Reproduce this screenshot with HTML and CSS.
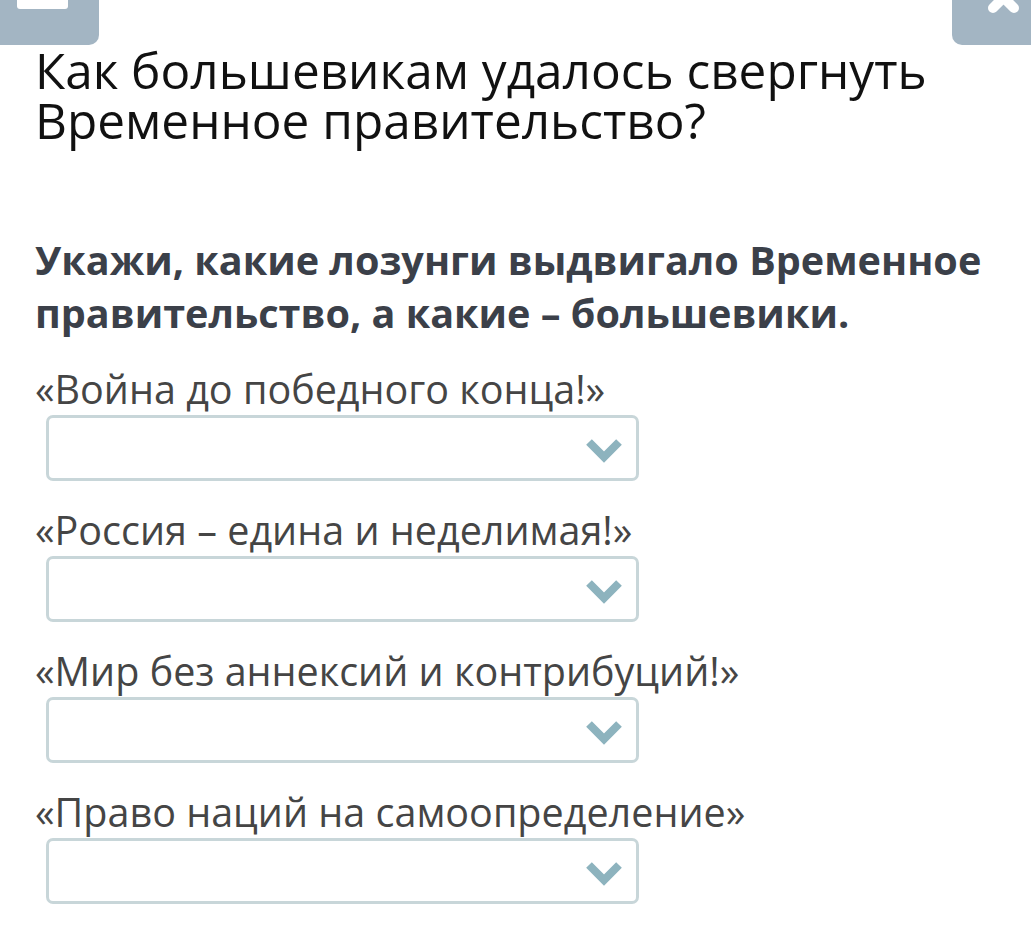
FILE: index.html
```html
<!DOCTYPE html>
<html lang="ru">
<head>
<meta charset="utf-8">
<link rel="stylesheet" href="styles.css">
</head>
<body>
<div class="topbar">
  <div class="btn btn-menu"><span class="bar"></span></div>
  <div class="btn btn-close">
    <svg width="79" height="45" viewBox="0 0 79 45">
      <path d="M41 8 L62 -13 M62 8 L41 -13" stroke="#fff" stroke-width="10" stroke-linecap="round" fill="none"/>
    </svg>
  </div>
</div>
<main class="content">
  <h1 class="title">Как большевикам удалось свергнуть Временное правительство?</h1>
  <h2 class="task">Укажи, какие лозунги выдвигало Временное правительство, а какие – большевики.</h2>
  <div class="item">
    <div class="label">«Война до победного конца!»</div>
    <div class="select"><svg class="chev" width="36" height="26" viewBox="0 0 36 26"><path d="M3 5 L18 20 L33 5" stroke="#8db3be" stroke-width="8" fill="none"/></svg></div>
  </div>
  <div class="item">
    <div class="label">«Россия – едина и неделимая!»</div>
    <div class="select"><svg class="chev" width="36" height="26" viewBox="0 0 36 26"><path d="M3 5 L18 20 L33 5" stroke="#8db3be" stroke-width="8" fill="none"/></svg></div>
  </div>
  <div class="item">
    <div class="label">«Мир без аннексий и контрибуций!»</div>
    <div class="select"><svg class="chev" width="36" height="26" viewBox="0 0 36 26"><path d="M3 5 L18 20 L33 5" stroke="#8db3be" stroke-width="8" fill="none"/></svg></div>
  </div>
  <div class="item">
    <div class="label">«Право наций на самоопределение»</div>
    <div class="select"><svg class="chev" width="36" height="26" viewBox="0 0 36 26"><path d="M3 5 L18 20 L33 5" stroke="#8db3be" stroke-width="8" fill="none"/></svg></div>
  </div>
</main>
</body>
</html>
```
FILE: styles.css
```css
html, body {
  margin: 0;
  padding: 0;
  background: #fff;
}
body {
  font-family: "Open Sans", "Noto Sans", sans-serif;
  width: 1031px;
  height: 952px;
  overflow: hidden;
}
.topbar {
  display: flex;
  justify-content: space-between;
  height: 45px;
}
.btn {
  background: #a3b5c3;
  height: 45px;
  position: relative;
}
.btn-menu {
  width: 99px;
  border-bottom-right-radius: 10px;
}
.btn-menu .bar {
  display: block;
  margin-left: 17px;
  width: 51px;
  height: 9px;
  background: #fff;
  border-radius: 0 0 3px 3px;
}
.btn-close {
  width: 79px;
  border-bottom-left-radius: 10px;
}
.btn-close svg {
  display: block;
}
.content {
  padding-left: 35px;
}
.title {
  margin: 0;
  font-weight: 400;
  font-size: 49.5px;
  line-height: 50px;
  color: #111;
  width: 980px;
}
.task {
  margin: 89px 0 0;
  font-weight: 700;
  font-size: 39.6px;
  line-height: 53px;
  color: #3b4049;
  width: 980px;
}
.item {
  margin-top: 24px;
}
.label {
  font-size: 39.5px;
  line-height: 50px;
  color: #454545;
  margin-bottom: 1px;
}
.select {
  margin-left: 11px;
  width: 593px;
  height: 66px;
  box-sizing: border-box;
  border: 3px solid #c8d6d9;
  border-radius: 7px;
  display: flex;
  align-items: center;
  justify-content: flex-end;
  padding-right: 14px;
}
.chev {
  display: block;
  margin-top: 4px;
}
```
